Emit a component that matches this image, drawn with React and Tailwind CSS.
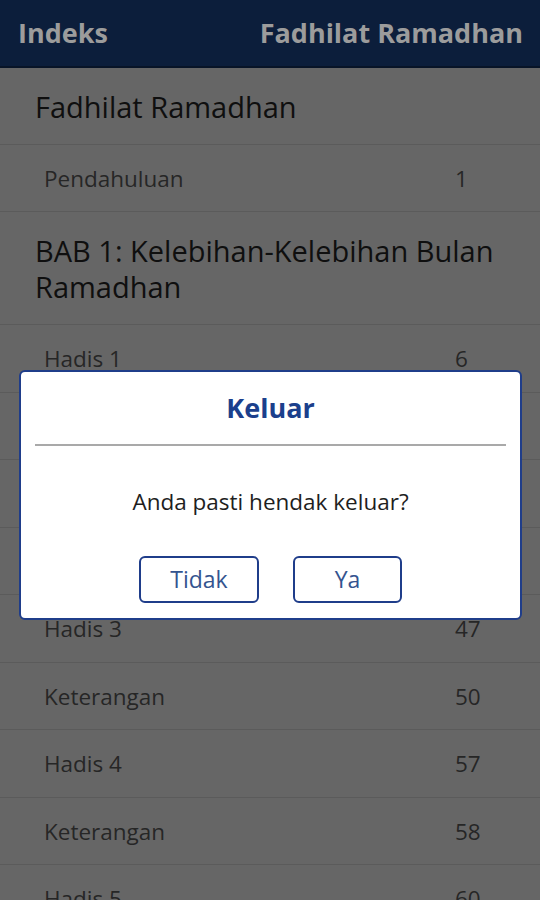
import React from 'react';

const rows = [
  { label: 'Keterangan', page: '8' },
  { label: 'Hadis 2', page: '27' },
  { label: 'Keterangan', page: '30' },
  { label: 'Hadis 3', page: '47' },
  { label: 'Keterangan', page: '50' },
  { label: 'Hadis 4', page: '57' },
  { label: 'Keterangan', page: '58' },
  { label: 'Hadis 5', page: '60' },
];

const Row = ({ label, page, className = 'h-[67.5px]' }) => (
  <div className={`grid grid-cols-[1fr_85px] items-center border-b border-[#5b5b5b] pl-[44px] text-[22.5px] text-[#262626] ${className}`}>
    <span>{label}</span>
    <span>{page}</span>
  </div>
);

const App = () => {
  return (
    <div className="relative h-[900px] w-[540px] overflow-hidden bg-[#666666] font-['Open_Sans',sans-serif]">
      {/* Action bar */}
      <div className="flex h-[68px] items-center justify-between border-b-2 border-[#081427] bg-[#0c1e3b] pl-[18px] pr-[17px] text-[27px] font-bold text-[#9c9c9c]">
        <span>Indeks</span>
        <span>Fadhilat Ramadhan</span>
      </div>

      {/* Index list */}
      <div>
        <div className="flex h-[77px] items-center border-b border-[#5b5b5b] pl-[35px] pt-[2px] text-[29px] text-[#0f0f0f]">
          Fadhilat Ramadhan
        </div>
        <Row label="Pendahuluan" page="1" className="h-[67px] pt-[2px]" />
        <div className="flex h-[113px] items-center border-b border-[#5b5b5b] pl-[35px] pr-[10px] pt-[2px] text-[29px] leading-[36px] text-[#0f0f0f]">
          BAB 1: Kelebihan-Kelebihan Bulan Ramadhan
        </div>
        <Row label="Hadis 1" page="6" className="h-[67.5px] pt-[2px]" />
        {rows.map((r, i) => (
          <Row key={i} label={r.label} page={r.page} className="h-[67.5px] pt-[2px]" />
        ))}
      </div>

      {/* Exit dialog */}
      <div className="absolute left-[19px] top-[370px] flex h-[250px] w-[503px] flex-col rounded-[6px] border-2 border-[#1f3d8a] bg-white">
        <div className="flex h-[72px] items-center justify-center text-[27px] font-bold text-[#1b3f8c]">
          Keluar
        </div>
        <div className="mx-[14px] h-[2px] bg-[#a9a9a9]" />
        <div className="flex h-[110px] items-center justify-center pt-[2px] text-[22.5px] text-[#1e1e1e]">
          Anda pasti hendak keluar?
        </div>
        <div className="flex justify-center gap-[34px]">
          <button className="h-[47px] w-[120px] rounded-[6px] border-2 border-[#1f3d8a] text-[23px] text-[#34548f]">
            Tidak
          </button>
          <button className="h-[47px] w-[109px] rounded-[6px] border-2 border-[#1f3d8a] text-[23px] text-[#34548f]">
            Ya
          </button>
        </div>
      </div>
    </div>
  );
};

export default App;
